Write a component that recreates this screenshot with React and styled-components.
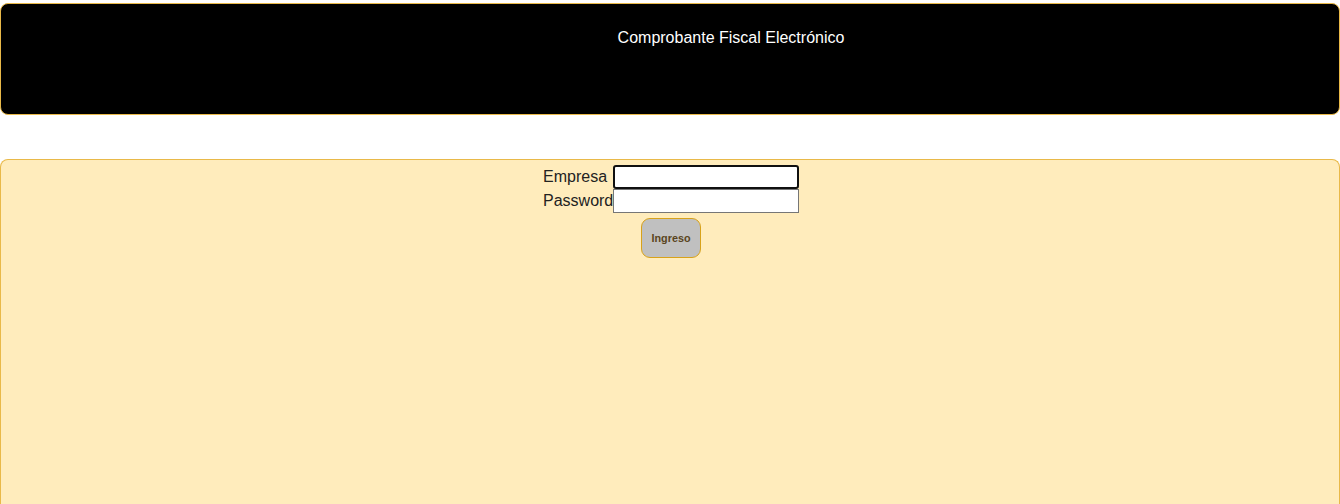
import React from "react"
import styled, { createGlobalStyle } from "styled-components"

const Global = createGlobalStyle`
  html, body {
    margin: 0;
    padding: 0;
    background: #ffffff;
    font-family: "Liberation Sans", Arial, sans-serif;
  }
`

const App = () => {
  return (
    <Page>
      <Global />
      <Header>
        <HeaderTitle>Comprobante Fiscal Electrónico</HeaderTitle>
      </Header>
      <Panel>
        <Form>
          <Label>Empresa</Label>
          <Input type="text" $focused />
          <Label>Password</Label>
          <Input type="password" />
          <ButtonCell>
            <Button type="button">Ingreso</Button>
          </ButtonCell>
        </Form>
      </Panel>
    </Page>
  )
}

export default App

const Page = styled.div`
  display: flex;
  flex-direction: column;
  row-gap: 44px;
  padding-top: 3px;
  height: 504px;
  box-sizing: border-box;
  overflow: hidden;
`

const Header = styled.div`
  height: 112px;
  flex-shrink: 0;
  box-sizing: border-box;
  background: #000000;
  border: 1px solid #e9b949;
  border-radius: 8px;
  display: flex;
  justify-content: center;
  padding: 25px 0 0 122px;
`

const HeaderTitle = styled.span`
  color: #ffffff;
  font-size: 16px;
  line-height: 18px;
  height: 18px;
`

const Panel = styled.div`
  flex: 1;
  background: #ffecbc;
  border: 1px solid #e9b949;
  border-bottom: none;
  border-radius: 8px 8px 0 0;
  display: flex;
  justify-content: center;
  padding: 5px 0 0 2px;
`

const Form = styled.div`
  display: grid;
  grid-template-columns: 70px 186px;
  grid-template-rows: 24px 24px auto;
  align-items: center;
  align-self: flex-start;
`

const Label = styled.label`
  font-size: 16px;
  color: #222222;
  line-height: 18px;
  white-space: nowrap;
`

const Input = styled.input`
  width: 186px;
  height: 24px;
  box-sizing: border-box;
  margin: 0;
  background: #ffffff;
  border: ${(p) => (p.$focused ? "2px solid #101010" : "1px solid #767676")};
  border-radius: ${(p) => (p.$focused ? "3px" : "0")};
  outline: none;
`

const ButtonCell = styled.div`
  grid-column: 1 / 3;
  display: flex;
  justify-content: center;
  padding-top: 5px;
`

const Button = styled.button`
  width: 60px;
  height: 40px;
  box-sizing: border-box;
  background: #c0c0c0;
  border: 1px solid #d8a21a;
  border-radius: 9px;
  font-family: "Liberation Sans", Arial, sans-serif;
  font-size: 10.8px;
  font-weight: bold;
  color: #5a4520;
  padding: 0;
`
